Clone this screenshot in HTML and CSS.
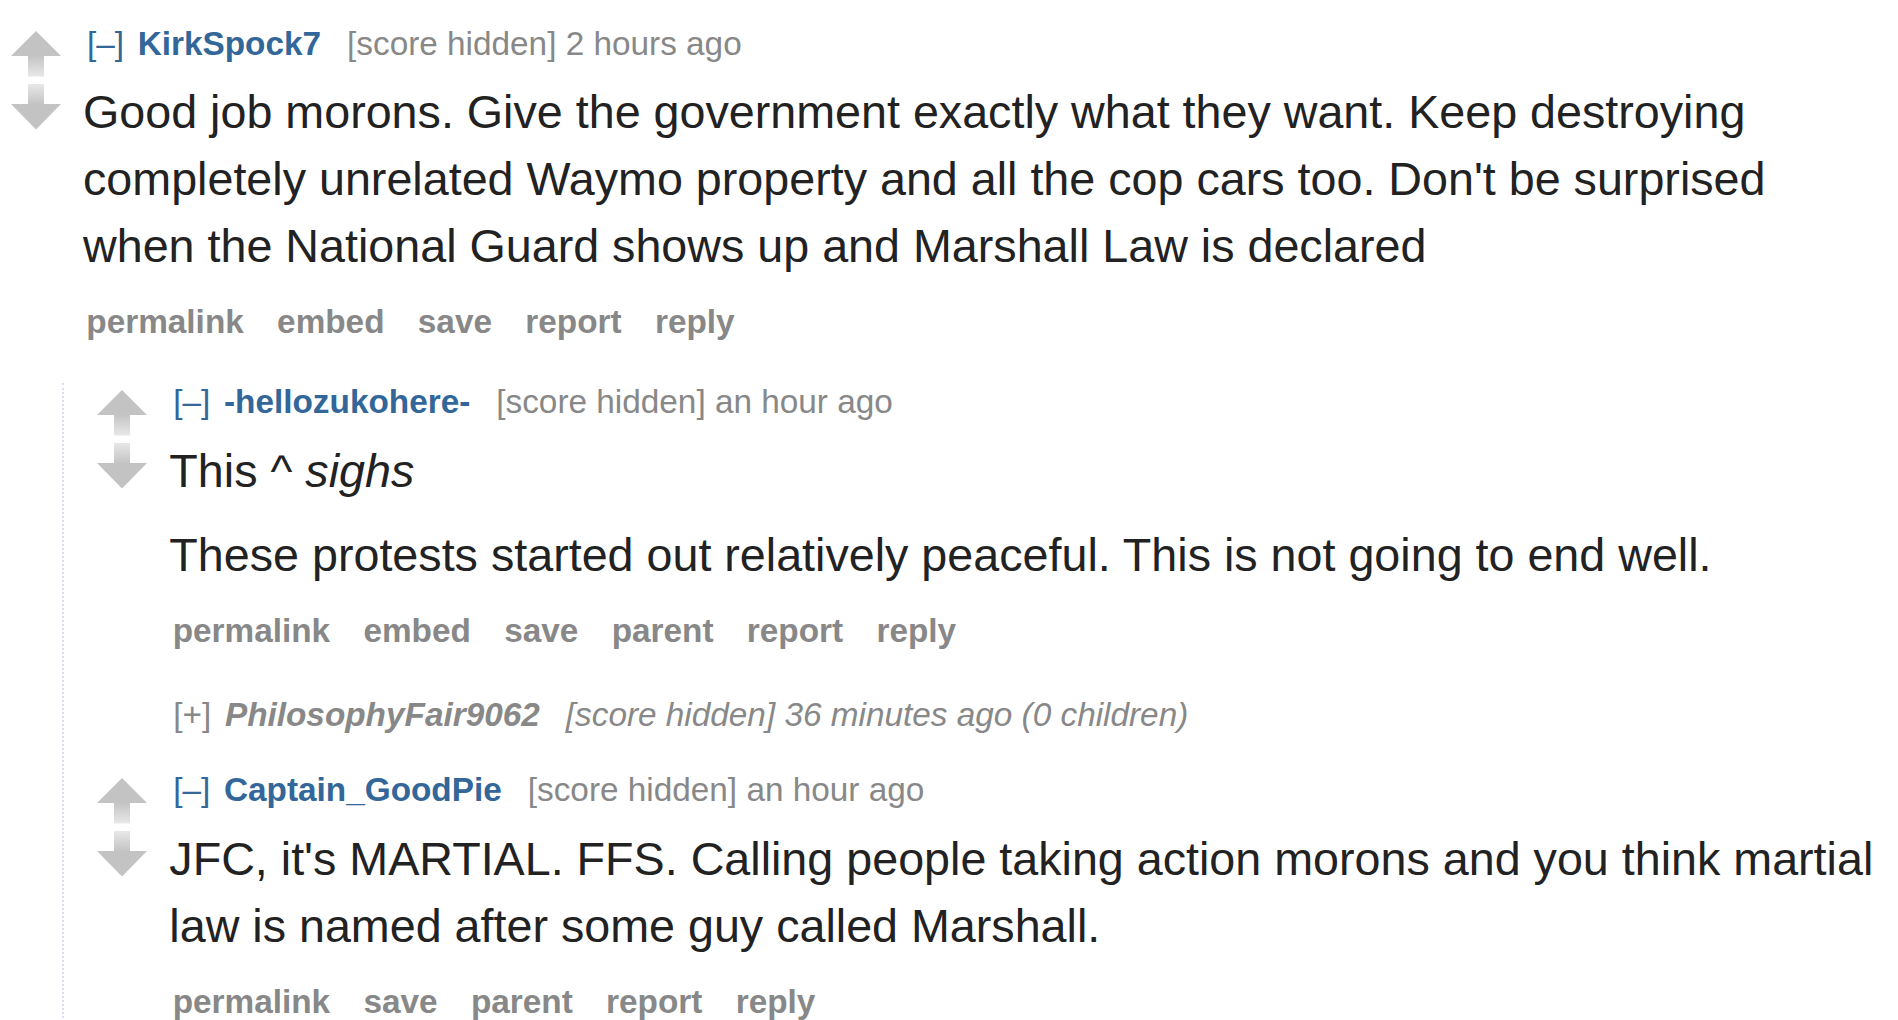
FILE: index.html
```html
<!DOCTYPE html>
<html lang="en">
<head>
<meta charset="utf-8">
<title>Comments</title>
<link rel="stylesheet" href="styles.css">
</head>
<body>
<div class="comment top">
  <div class="row">
    <div class="midcol">
      <svg class="arrow" viewBox="0 0 50 46.67"><defs><linearGradient id="gu1" x1="0" y1="0" x2="0" y2="1"><stop offset="0" stop-color="#c3c3c3"/><stop offset="1" stop-color="#e8e8e8"/></linearGradient></defs><path d="M25 0 L50 25 L0 25 Z" fill="#c3c3c3"/><rect x="17" y="24.5" width="16" height="21" fill="url(#gu1)"/></svg>
      <svg class="arrow" viewBox="0 0 50 46.67"><defs><linearGradient id="gd1" x1="0" y1="0" x2="0" y2="1"><stop offset="0" stop-color="#e8e8e8"/><stop offset="1" stop-color="#c3c3c3"/></linearGradient></defs><rect x="17" y="0" width="16" height="20.5" fill="url(#gd1)"/><path d="M0 20 L50 20 L25 45.5 Z" fill="#c3c3c3"/></svg>
    </div>
    <div class="entry">
      <p class="tagline"><span class="expand">[–]</span><span class="author">KirkSpock7</span><span class="score">[score hidden] 2 hours ago</span></p>
      <div class="md">
        <p>Good job morons. Give the government exactly what they want. Keep destroying completely unrelated Waymo property and all the cop cars too. Don't be surprised when the National Guard shows up and Marshall Law is declared</p>
      </div>
      <ul class="buttons">
        <li><a>permalink</a></li>
        <li><a>embed</a></li>
        <li><a>save</a></li>
        <li><a>report</a></li>
        <li><a>reply</a></li>
      </ul>
    </div>
  </div>
  <div class="child">
    <div class="comment">
      <div class="row">
        <div class="midcol">
          <svg class="arrow" viewBox="0 0 50 46.67"><defs><linearGradient id="gu2" x1="0" y1="0" x2="0" y2="1"><stop offset="0" stop-color="#c3c3c3"/><stop offset="1" stop-color="#e8e8e8"/></linearGradient></defs><path d="M25 0 L50 25 L0 25 Z" fill="#c3c3c3"/><rect x="17" y="24.5" width="16" height="21" fill="url(#gu2)"/></svg>
          <svg class="arrow" viewBox="0 0 50 46.67"><defs><linearGradient id="gd2" x1="0" y1="0" x2="0" y2="1"><stop offset="0" stop-color="#e8e8e8"/><stop offset="1" stop-color="#c3c3c3"/></linearGradient></defs><rect x="17" y="0" width="16" height="20.5" fill="url(#gd2)"/><path d="M0 20 L50 20 L25 45.5 Z" fill="#c3c3c3"/></svg>
        </div>
        <div class="entry">
          <p class="tagline"><span class="expand">[–]</span><span class="author">-hellozukohere-</span><span class="score">[score hidden] an hour ago</span></p>
          <div class="md">
            <p>This ^ <em>sighs</em></p>
            <p>These protests started out relatively peaceful. This is not going to end well.</p>
          </div>
          <ul class="buttons">
            <li><a>permalink</a></li>
            <li><a>embed</a></li>
            <li><a>save</a></li>
            <li><a>parent</a></li>
            <li><a>report</a></li>
            <li><a>reply</a></li>
          </ul>
        </div>
      </div>
    </div>
    <div class="comment collapsed">
      <div class="row">
        <div class="midcol"></div>
        <div class="entry">
          <p class="tagline"><span class="expand">[+]</span><span class="author">PhilosophyFair9062</span><span class="score">[score hidden] 36 minutes ago (0 children)</span></p>
        </div>
      </div>
    </div>
    <div class="comment after-collapsed">
      <div class="row">
        <div class="midcol">
          <svg class="arrow" viewBox="0 0 50 46.67"><defs><linearGradient id="gu3" x1="0" y1="0" x2="0" y2="1"><stop offset="0" stop-color="#c3c3c3"/><stop offset="1" stop-color="#e8e8e8"/></linearGradient></defs><path d="M25 0 L50 25 L0 25 Z" fill="#c3c3c3"/><rect x="17" y="24.5" width="16" height="21" fill="url(#gu3)"/></svg>
          <svg class="arrow" viewBox="0 0 50 46.67"><defs><linearGradient id="gd3" x1="0" y1="0" x2="0" y2="1"><stop offset="0" stop-color="#e8e8e8"/><stop offset="1" stop-color="#c3c3c3"/></linearGradient></defs><rect x="17" y="0" width="16" height="20.5" fill="url(#gd3)"/><path d="M0 20 L50 20 L25 45.5 Z" fill="#c3c3c3"/></svg>
        </div>
        <div class="entry">
          <p class="tagline"><span class="expand">[–]</span><span class="author">Captain_GoodPie</span><span class="score">[score hidden] an hour ago</span></p>
          <div class="md">
            <p>JFC, it's MARTIAL. FFS. Calling people taking action morons and you think martial law is named after some guy called Marshall.</p>
          </div>
          <ul class="buttons">
            <li><a>permalink</a></li>
            <li><a>save</a></li>
            <li><a>parent</a></li>
            <li><a>report</a></li>
            <li><a>reply</a></li>
          </ul>
        </div>
      </div>
    </div>
  </div>
</div>
</body>
</html>
```

FILE: styles.css
```css
html, body {
  background: #ffffff;
}

body {
  margin: 0;
  padding: 24.5px 15px 40px 1px;
  font-family: "Liberation Sans", Arial, Helvetica, sans-serif;
  color: #222222;
}

.comment.top {
  margin-left: 10px;
}

.child .comment {
  margin-left: 33.33px;
}

.child .comment + .comment {
  margin-top: 42px;
}

.child .comment.collapsed {
  margin-top: 45.5px;
}

.child .comment.after-collapsed {
  margin-top: 37px;
}

.row {
  display: flex;
  align-items: flex-start;
}

.midcol {
  flex: none;
  width: 50px;
  margin-right: 22px;
  padding-top: 6.67px;
  display: flex;
  flex-direction: column;
  gap: 6.67px;
}

.arrow {
  display: block;
  width: 50px;
  height: 46.67px;
}

.entry {
  flex: 1;
  min-width: 0;
}

.tagline {
  margin: 0;
  padding-left: 4px;
  display: flex;
  white-space: nowrap;
  font-size: 33.33px;
  line-height: 38.33px;
  color: #888888;
}

.expand {
  color: #336699;
  margin-right: 13.6px;
}

.author {
  color: #336699;
  font-weight: bold;
  margin-right: 26px;
}

.collapsed .expand,
.collapsed .author {
  color: #888888;
}

.collapsed .author,
.collapsed .score {
  font-style: italic;
}

.md p {
  margin: 16.67px 0;
  font-size: 46.67px;
  line-height: 66.67px;
  color: #222222;
}

.md em {
  font-style: italic;
}

.buttons {
  list-style: none;
  margin: 0;
  padding: 7px 0 0;
  display: flex;
  gap: 26.67px;
  font-size: 33.33px;
  line-height: 38.33px;
  font-weight: bold;
  white-space: nowrap;
}

.buttons a {
  color: #888888;
  padding: 0 3.33px;
  text-decoration: none;
}

.child {
  margin-left: 51px;
  margin-top: 42px;
  border-left: 2px dotted #dcdcfa;
}
```
